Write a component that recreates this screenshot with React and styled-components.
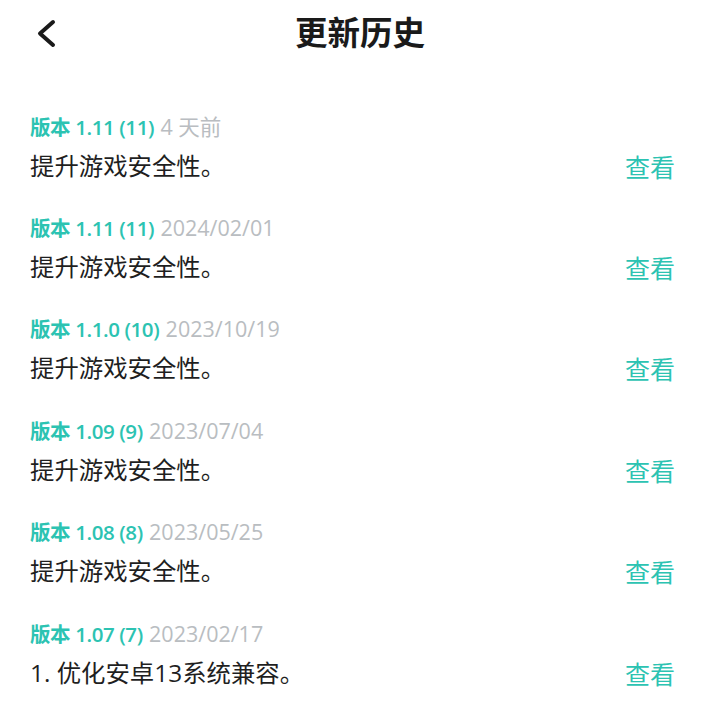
import React from "react";
import styled, { createGlobalStyle } from "styled-components";

const Global = createGlobalStyle`
  html, body { margin: 0; padding: 0; background: #fff; }
  body { font-family: "Noto Sans CJK SC", "Noto Sans", sans-serif; }
`;

const Page = styled.div`
  width: 720px;
  height: 721px;
  overflow: hidden;
  background: #fff;
  display: flex;
  flex-direction: column;
`;

const Header = styled.header`
  position: relative;
  height: 68px;
  display: flex;
  align-items: center;
  justify-content: center;
`;

const Back = styled.button`
  position: absolute;
  left: 37px;
  top: 18px;
  width: 22px;
  height: 32px;
  border: 0;
  padding: 0;
  background: none;
  display: block;
  svg { display: block; }
`;

const Title = styled.h1`
  margin: 0;
  font-size: 32.5px;
  font-weight: 700;
  color: #1a1a1a;
  line-height: 40px;
`;

const List = styled.div`
  display: flex;
  flex-direction: column;
  padding-top: 51px;
`;

const Row = styled.div`
  display: flex;
  align-items: flex-end;
  padding: 0 45px 31.4px 30px;
`;

const Info = styled.div`
  flex: 1;
  display: flex;
  flex-direction: column;
  gap: 8px;
`;

const Label = styled.div`
  font-family: "Open Sans", "Noto Sans CJK SC", sans-serif;
  font-size: 20.5px;
  line-height: 28px;
  height: 28px;
  white-space: nowrap;
`;

const Version = styled.span`
  color: #2cc3b2;
  font-weight: 600;
  letter-spacing: -0.4px;
`;

const DateText = styled.span`
  color: #b9bdc1;
  font-weight: 400;
  font-size: 21.5px;
  margin-left: 1px;
`;

const Body = styled.div`
  font-family: "Open Sans", "Noto Sans CJK SC", sans-serif;
  font-size: 24.4px;
  line-height: 34px;
  height: 34px;
  color: #1f1f1f;
  white-space: nowrap;
`;

const View = styled.span`
  font-size: 25px;
  line-height: 34px;
  color: #2cc3b2;
`;

const items = [
  { v: "版本 1.11 (11)", d: "4 天前", t: "提升游戏安全性。" },
  { v: "版本 1.11 (11)", d: "2024/02/01", t: "提升游戏安全性。" },
  { v: "版本 1.1.0 (10)", d: "2023/10/19", t: "提升游戏安全性。" },
  { v: "版本 1.09 (9)", d: "2023/07/04", t: "提升游戏安全性。" },
  { v: "版本 1.08 (8)", d: "2023/05/25", t: "提升游戏安全性。" },
  { v: "版本 1.07 (7)", d: "2023/02/17", t: "1. 优化安卓13系统兼容。" },
];

export default function App() {
  return (
    <Page>
      <Global />
      <Header>
        <Back aria-label="返回">
          <svg width="22" height="32" viewBox="0 0 22 32">
            <path
              d="M16 4 L3 15.5 L16 27"
              fill="none"
              stroke="#1a1a1a"
              strokeWidth="4"
              strokeLinecap="round"
              strokeLinejoin="round"
            />
          </svg>
        </Back>
        <Title>更新历史</Title>
      </Header>
      <List>
        {items.map((it, i) => (
          <Row key={i}>
            <Info>
              <Label>
                <Version>{it.v}</Version> <DateText>{it.d}</DateText>
              </Label>
              <Body>{it.t}</Body>
            </Info>
            <View>查看</View>
          </Row>
        ))}
      </List>
    </Page>
  );
}
